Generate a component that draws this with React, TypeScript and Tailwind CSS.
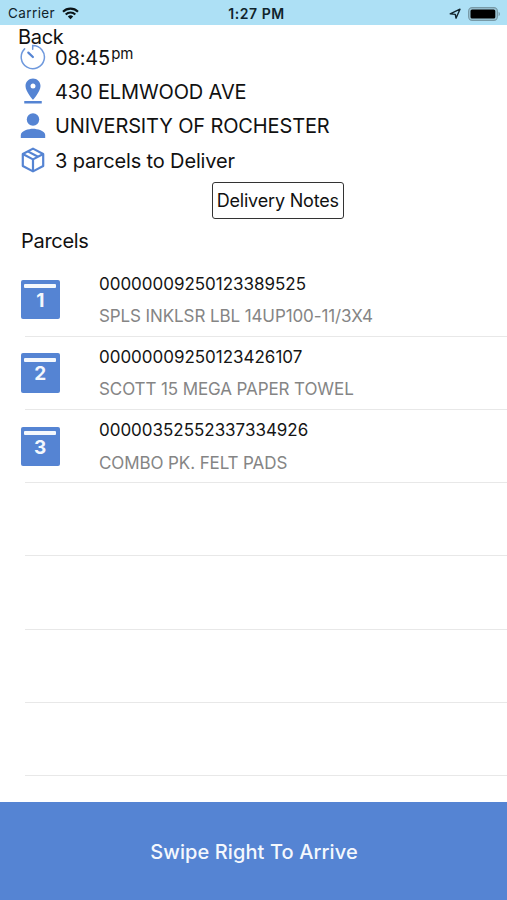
import type { ReactNode } from 'react';
import { MdPinDrop } from 'react-icons/md';

type Parcel = {
  id: number;
  barcode: string;
  description: string;
};

const parcels: Parcel[] = [
  { id: 1, barcode: '00000009250123389525', description: 'SPLS INKLSR LBL 14UP100-11/3X4' },
  { id: 2, barcode: '00000009250123426107', description: 'SCOTT 15 MEGA PAPER TOWEL' },
  { id: 3, barcode: '00000352552337334926', description: 'COMBO PK. FELT PADS' },
];

const emptyRows = [4, 5, 6, 7];

function WifiIcon() {
  return (
    <svg width="17" height="13" viewBox="0 0 17 13" fill="none" stroke="#0b1417" strokeWidth="2.1" aria-hidden="true">
      <path d="M1 4.7a10.6 10.6 0 0 1 15 0" />
      <path d="M3.7 7.5a6.8 6.8 0 0 1 9.6 0" />
      <path d="M8.5 12.2 5.8 9.5a3.8 3.8 0 0 1 5.4 0z" fill="#0b1417" stroke="none" />
    </svg>
  );
}

function LocationIcon() {
  return (
    <svg width="12" height="12" viewBox="0 0 12 12" fill="none" stroke="#10242c" strokeWidth="1.4" strokeLinejoin="round" aria-hidden="true">
      <path d="M11 1.2 7 10.2 6.3 6.4 1.2 5.9z" />
    </svg>
  );
}

function BatteryIcon() {
  return (
    <svg width="33" height="14" viewBox="0 0 33 14" aria-hidden="true">
      <rect x="0.6" y="0.6" width="28.8" height="12.8" rx="3.6" fill="#9cc6d6" stroke="#7799a6" strokeWidth="1.1" />
      <rect x="2.5" y="2.5" width="24.8" height="9" rx="1.6" fill="#000" />
      <path d="M30.6 4.8c1.8.7 1.8 3.7 0 4.4z" fill="#7799a6" />
    </svg>
  );
}

function TimerIcon() {
  return (
    <svg width="26" height="26" viewBox="0 0 26 26" fill="none" stroke="#6f99dd" strokeWidth="1.5" strokeLinecap="round" aria-hidden="true">
      <path d="M12.7 5.2V1.5A11.6 11.6 0 1 1 4.6 4.9" />
      <path d="m8.3 8.6 4.6 4.4" stroke="#5584d3" strokeWidth="2.2" />
    </svg>
  );
}

function PersonIcon() {
  return (
    <svg width="26" height="26" viewBox="0 0 26 26" fill="#5584d3" aria-hidden="true">
      <circle cx="13" cy="6.5" r="6.2" />
      <path d="M.8 24.9v-3c0-4.2 8.1-6.2 12.2-6.2s12.2 2 12.2 6.2v3z" />
    </svg>
  );
}

function BoxIcon() {
  return (
    <svg width="26" height="26" viewBox="0 0 26 26" fill="none" stroke="#5584d3" strokeWidth="2.2" strokeLinejoin="round" aria-hidden="true">
      <path d="M13 1.6 23.2 7v12L13 24.4 2.8 19V7z" />
      <path d="M2.8 7 13 12.4 23.2 7M13 12.4v12M7.8 4.4 18 9.8" />
    </svg>
  );
}

function InfoRow({ icon, children }: { icon: ReactNode; children: ReactNode }) {
  return (
    <div className="flex h-[34.3px] items-center">
      <div className="flex w-[26px] shrink-0 items-center justify-center">{icon}</div>
      <div className="ml-[9px] whitespace-nowrap pt-[1.2px] text-[20px] leading-none tracking-[-0.14px]">{children}</div>
    </div>
  );
}

function ParcelRow({ parcel }: { parcel: Parcel }) {
  return (
    <div className="flex h-[73.3px] items-start">
      <div className="ml-[20.5px] mt-[16.7px] flex h-[39.5px] w-[39.5px] shrink-0 flex-col items-center rounded-[2px] bg-[#5584d3]">
        <div className="mt-[4.5px] h-[4px] w-[32px] rounded-[1px] bg-[#f4f8fd]" />
        <span className="mt-[2.5px] text-[19px] font-bold leading-[19px] text-[#f4f8fd]">{parcel.id}</span>
      </div>
      <div className="ml-[39px] mt-[8.3px] flex flex-1 flex-col whitespace-nowrap">
        <span className="text-[17px] leading-[24px] tracking-[-0.02px] text-[#151515]">{parcel.barcode}</span>
        <span className="mt-[8.5px] text-[17px] leading-[24px] tracking-[-0.1px] text-[#858585]">{parcel.description}</span>
      </div>
    </div>
  );
}

export default function App() {
  return (
    <div className="flex h-[900px] w-[507px] flex-col overflow-hidden bg-white font-['Inter','Liberation_Sans',sans-serif] text-[#111]">
      {/* Status bar */}
      <div className="grid h-[25px] shrink-0 grid-cols-3 items-center bg-[#ade0f5] pl-[8px] pr-[6px] pt-[2px] text-[#10242c]">
        <div className="flex items-center gap-[7px]">
          <span className="pt-px text-[13.5px] leading-none tracking-[0.4px]">Carrier</span>
          <WifiIcon />
        </div>
        <span className="pl-[4px] text-center text-[14px] font-semibold leading-none tracking-[0.55px]">1:27 PM</span>
        <div className="flex items-center justify-end gap-[7px]">
          <LocationIcon />
          <BatteryIcon />
        </div>
      </div>

      {/* Back button runs close to the first info row */}
      <button type="button" className="ml-[18px] h-[15px] shrink-0 self-start text-left text-[20px] leading-[24px] tracking-[-0.3px]">
        Back
      </button>

      <div className="flex shrink-0 flex-col pl-5">
        <InfoRow icon={<TimerIcon />}>
          <span>08:45</span>
          <span className="ml-[1px] inline-block -translate-y-[6px] text-[15px] leading-none">pm</span>
        </InfoRow>
        <InfoRow icon={<MdPinDrop className="h-[30px] w-[30px] shrink-0 text-[#5584d3]" aria-hidden="true" />}>430 ELMWOOD AVE</InfoRow>
        <InfoRow icon={<PersonIcon />}>UNIVERSITY OF ROCHESTER</InfoRow>
        <InfoRow icon={<BoxIcon />}>3 parcels to Deliver</InfoRow>
      </div>

      <button
        type="button"
        className="ml-[211.5px] mt-[5px] flex h-[36.5px] w-[132.5px] shrink-0 items-center justify-center whitespace-nowrap rounded-[3px] border-[1.5px] border-[#333] pt-[1px] text-[18px] leading-none tracking-[-0.18px]"
      >
        Delivery Notes
      </button>

      <h2 className="ml-[21px] mt-[10.3px] h-[34.3px] shrink-0 text-[20px] leading-[24px] tracking-[-0.3px]">Parcels</h2>

      <ul className="flex flex-1 flex-col">
        {parcels.map((parcel) => (
          <li key={parcel.id} className="shrink-0">
            <ParcelRow parcel={parcel} />
            <div className="-mt-px ml-[25px] h-px bg-[#e8e8e8]" />
          </li>
        ))}
        {emptyRows.map((row) => (
          <li key={row} className="ml-[25px] h-[73.3px] shrink-0 border-b border-[#e8e8e8]" />
        ))}
      </ul>

      <div className="flex h-[98px] shrink-0 items-center justify-center bg-[#5584d3] pl-px pt-[2px] text-[20px] font-medium tracking-[0.1px] text-[#f4f8fd]">
        Swipe Right To Arrive
      </div>
    </div>
  );
}
